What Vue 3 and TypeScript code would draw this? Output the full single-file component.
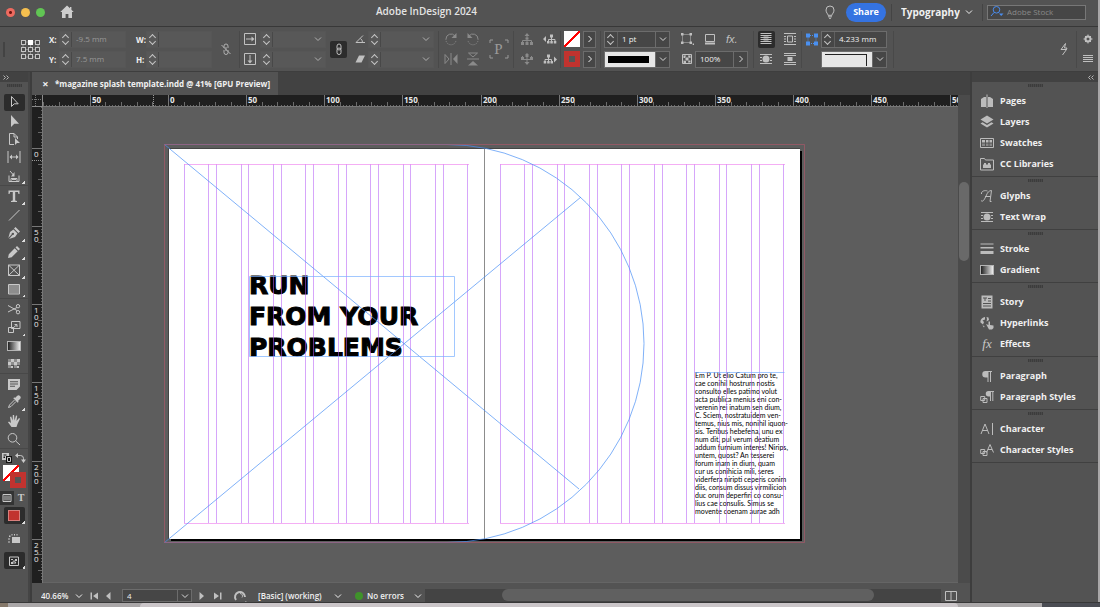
<script setup lang="ts">
import { h, ref } from 'vue'

type Shape = [mode: string, d: string]

const icons: Record<string, Shape[]> = {
  home: [['f', 'M7 0.5 0.3 7H2v6h3.6V9h2.8v4H12V7h1.7L11.4 4.7V2H10v1.3z']],
  bulb: [['s', 'M5 10.3C5 8.6 3 8 3 5a4 4 0 0 1 8 0c0 3-2 3.600-2 5.300zM5 11.800h4M6 13.300h2']],
  chev: [['s', 'M4 5.500 7 8.500 10 5.500']],
  right: [['s', 'M5.500 4 8.500 7 5.500 10']],
  search: [['s', 'M6.500 1.500a3.300 3.300 0 1 1 0 6.600 3.300 3.300 0 0 1 0-6.600M4 7.500 1 11'], ['f', 'M9 8.500h4.500L11.200 11z']],
  unlink: [['s', 'M5 6V4a2 2 0 0 1 4 0v2M9 8v2.500a2 2 0 0 1-4 0V8M7 5v4M2.500 3 11.500 12']],
  link: [['s', 'M5 6V4a2 2 0 0 1 4 0v2.500M9 8v2.500a2 2 0 0 1-4 0V8M5 6a2 2 0 0 0 4 0M5 8a2 2 0 0 1 4 0']],
  scaleX: [['s', 'M1.500 1.500h11v11h-11zM3 7h7'], ['f', 'M8.500 4.500 11.500 7 8.500 9.500z']],
  scaleY: [['s', 'M1.500 1.500h11v11h-11zM7 3v7'], ['f', 'M4.500 8.500 7 11.500 9.500 8.500z']],
  angle: [['s', 'M12 10.500H3L10 3.500M7.500 6.500a5 5 0 0 1 2 4']],
  shear: [['f', 'M6 3.500h6L8.500 10.500h-6z']],
  rotCw: [['s', 'M2 7a5 5 0 0 1 9-3'], ['f', 'M12.500 1v5h-5z'], ['d', 'M2 7a5 5 0 0 0 10 1.500']],
  rotCcw: [['s', 'M12 7a5 5 0 0 0-9-3'], ['f', 'M1.500 1v5h5z'], ['d', 'M12 7a5 5 0 0 1-10 1.500']],
  flipH: [['s', 'M1 2.500 5 7 1 11.500zM7 1v12'], ['f', 'M13.500 2v10L9 7z']],
  flipV: [['s', 'M2.500 1 7 5 11.500 1zM1 7h12'], ['f', 'M2 13.500h10L7 9z']],
  treeUp: [['s', 'M7 3v9M2.500 12V8.500h9V12'], ['f', 'M4.500 4 7 1 9.500 4zM1 10h3v3H1zM5.500 10h3v3h-3zM10 10h3v3h-3zM5.500 5.500h3v2h-3z']],
  treeDown: [['s', 'M7 1v10M2.500 4v3.500h9V4'], ['f', 'M4.500 10 7 13 9.500 10zM1 5h3v3H1zM5.500 2h3v3h-3zM10 5h3v3h-3z']],
  treePrev: [['s', 'M8.500 4v6M5.500 10V7.500h6.500V10'], ['f', 'M0 7 3 4v6zM7 2.500h3v3H7zM4 9h2.500v2.500H4zM7.300 9h2.500v2.500H7.300zM10.800 9h2.500v2.500h-2.500z']],
  treeNext: [['s', 'M5.500 4v6M2 10V7.500h6.500V10'], ['f', 'M14 7.500 11 4.500v6zM4 2.500h3v3H4zM.7 9h2.500v2.500H.7zM4.200 9h2.500v2.500H4.200zM7.500 9H10v2.500H7.500z']],
  corner: [['d', 'M2.500 2.500h8v8h-8z'], ['f', 'M1 1h2.500v2.500H1zM9.500 1H12v2.500H9.500zM1 9.500h2.500V12H1zM9.500 9.500H12V12H9.500zM12.700 11.500H14V13h-1.300z']],
  shadow: [['s', 'M2.500 2.500h9v7h-9z'], ['f', 'M2 10.500h10v2H2z']],
  opacity: [['s', 'M2.500 2.500h9v9h-9z'], ['f', 'M3.500 3.500H6L5 6H3.500zM8 3.500h2.500V6L8.500 5.500zM5.500 5.500h3v3h-3zM3.500 8.500 6 9v2H3.500zM8.500 8.500h2v2H8z']],
  wrapNone: [['s', 'M1.500 1.500h11M1.500 3.500h11M1.500 5.500h11M1.500 7.500h11M1.500 9.500h11M1.500 11.500h11'], ['m', 'M4.500 4h5v5h-5z']],
  wrapBox: [['s', 'M1 1.500h12M1 12.500h12M1 4.500h2M1 7h2M1 9.500h2M11 4.500h2M11 7h2M11 9.500h2M4.500 4h5v6h-5z']],
  wrapShape: [['s', 'M1 2.500h12M1 11.500h12M1 5.500h2M1 8.500h2M11 5.500h2M11 8.500h2'], ['f', 'M7 3.500a3.500 3.500 0 1 1 0 7 3.500 3.500 0 0 1 0-7']],
  wrapJump: [['s', 'M1 1.500h12M1 3.500h12M1 10.500h12M1 12.500h12'], ['f', 'M4.500 5h5v4h-5z']],
  corners: [['d', 'M3 3.500h8v8H3z'], ['f', 'M1 1.500h4v4H1zM9 1.500h4v4H9zM1 9.500h4v4H1zM9 9.500h4v4H9z']],
  bolt: [['s', 'M8.500 1.500 4 7.500h5.500L5.500 13M8.500 1.500 7.500 6H10L9 8']],
  gear: [['w', 'M7 4.500a2.500 2.500 0 1 1 0 5 2.500 2.500 0 0 1 0-5'], ['s', 'M7 2.500v1.500M7 10v1.500M2.500 7H4M10 7h1.500M4 4l1 1M9 9l1 1M10 4 9 5M5 9l-1 1']],
  menu: [['s', 'M2 3.500h10M2 5.500h10M2 7.500h10M2 9.500h10']],
  select: [['s', 'M4.500 1.500v10l2.700-2.700h4z']],
  direct: [['f', 'M4 1v12l3.300-3.300H12z']],
  page: [['s', 'M7 12.500H2.500v-11H7L10.500 5v2M7 1.500V5h3.500'], ['f', 'M8 6v7l2-2h3z']],
  gap: [['s', 'M1 1v12M13 1v12M3 7h8'], ['f', 'M2.500 7 5 4.500v5zM11.500 7 9 4.500v5z']],
  collect: [['s', 'M2 6.500v6h10v-6M4 12V9.500h6V12M3 2l3.500 4'], ['f', 'M7.500 3v4.500H4zM5 9h4v2H5z']],
  type: [['f', 'M1.500 1.500h11V5h-1l-.6-2H8.200v8.600l1.800.4v1H4v-1l1.800-.4V3H3.100l-.6 2h-1z']],
  line: [['s', 'M2 12.500 12.500 2']],
  pen: [['f', 'M8.500 1 13 5.500 11.500 7 7 2.500zM6.500 3.500 10.500 7.500 8 11 2 13 5.500 9a1.200 1.200 0 1 0-.8-.8L1.300 12 3 6z']],
  pencil: [['f', 'M10 1 13 4 11.500 5.500l-3-3zM7.700 3.200l3 3-6 6L1 13l.8-3.700z']],
  frame: [['s', 'M1.500 2h11v10.500h-11zM1.500 2l11 10.500M12.500 2l-11 10.500']],
  rect: [['s', 'M1.500 2.500h11v9.500h-11z'], ['m', 'M2 3h10v8.500H2z']],
  scissors: [['s', 'M1 3.500 10 8.500M1 10 10 5.500M11 2.500a1.700 1.700 0 1 1 0 3.400 1.700 1.700 0 0 1 0-3.400M11 8.500a1.700 1.700 0 1 1 0 3.400 1.700 1.700 0 0 1 0-3.400']],
  transform: [['s', 'M4.500 1.500h8.500v7H4.500zM1.500 7.500h5v5h-5zM5 9l5-4.500M7.500 4.500H10v2.500']],
  feather: [['m', 'M1 2h3v3h3V2h3v3h3v3h-3v3H7V8H4v3H1V8h3V5H1z'], ['f', 'M4 2h3v3H4zM10 2h3v3h-3zM1 5h3v3H1zM7 5h3v3H7zM4 9h2v2H4zM10 9h2v2h-2z']],
  note: [['f', 'M1 2h12v7.500L9.500 13H1zM3 4.200v1h8v-1zM3 6.500v1h8v-1zM3 8.800v1h5v-1z']],
  dropper: [['f', 'M10 1a2 2 0 0 1 3 3L11 6l.7.8-1 1L6.300 3.300l1-1L8 3z'], ['s', 'M7.500 5 2.500 10 1.500 12.500 4 11.500 9 6.500']],
  hand: [['f', 'M4.500 13 1 8.200 2 7.400 4 9 3 3 4.200 2.600 5.600 6.500 5.800 1H7.100l.4 5.400L9 1.500l1.200.3-.7 5.100L12 4l1 .7L10.500 10 9.500 13z']],
  zoom: [['s', 'M5.500 1.500a4.300 4.300 0 1 1 0 8.600 4.300 4.300 0 0 1 0-8.600M8.700 9 13 13']],
  swap: [['s', 'M3 4.500h3.500a3 3 0 0 1 3 3V9'], ['f', 'M1 4.500 4 2v5zM7 8.500h5L9.500 12z']],
  defaults: [['f', 'M2 2h7v7H2z'], ['b', 'M6 5h6v7H6zM3.500 3.500h3v1h-3zM3.500 5.500h1.500V7H3.500z'], ['s', 'M7.500 6.500h3v4h-3z']],
  container: [['s', 'M3 3.500h8v7H3z'], ['m', 'M4 4.500h6v5H4z']],
  screen: [['f', 'M5 5h8v6H5zM2 3.500h1.500V5H2zM4.500 2h1v1.500h-1zM7 2h1v1.500H7zM9.500 2h1v1.500h-1zM1 6.500h2v1H1zM1 9.500h2v1H1z']],
  preview: [['s', 'M2.500 3h9v8.500h-9zM4 5.500h2M8 5.500h2M7 6.500 5 9h4z'], ['f', 'M4 8h2v2H4zM8 5h2v2H8z']],
  pages: [['f', 'M1 5 4 3h2v10H1zM8 3h2l3 2v8H8z'], ['s', 'M7 .5v13.500']],
  layers: [['f', 'M7 0.500 13.500 4.500 7 8.500.5 4.500zM.5 8.500 2.500 7.200 7 10l4.500-2.800 2 1.300L7 12.500z']],
  swatches: [['s', 'M.5 2.500h13v9H.5z'], ['f', 'M2 4h3v2.500H2zM6 4h2.500v2.500H6zM9.500 4H12v2.500H9.500z'], ['m', 'M2 7.500h3V10H2zM6 7.500h2.500V10H6zM9.500 7.500H12V10H9.500z']],
  library: [['s', 'M.5 1.500h4l1 1.500h8v10H.5z'], ['f', 'M3 7.500h1V6h2v1.500h2V6h2v1.500h1V11H3z']],
  glyphs: [['s', 'M1 11.500c2 2 3.500-1 5.500-5.500 1-2.500 2.500-4.500 5-4.500L10 12.500h1.500M5 7.500h5.500M1.500 5C1 2 5 1 7.500 2']],
  stroke: [['f', 'M.5 1.500h13v1H.5zM.5 5h13v1.500H.5zM.5 9h13v3H.5z']],
  story: [['f', 'M1.500.5h11v13h-11zM3 2.500v1h1.500V6h1V3.500H7v-1zM8 3v1h3V3zM8 5.500v1h3v-1zM3 8v1h8V8zM3 10.500v1h8v-1z']],
  hyper: [['f', 'M5 1C2 1.500 0 4 .5 6.500L3 8.500 4 6 2.500 4.500 5 3.500zM6.500 1l2 .5L9 4 6.500 5.500 7 3zM6 8l2.500 1V5.500h1.500V9l3.500.5V12L12 13.500H9zM2.500 9.500l2 .5-.5 1.500z']],
  para: [['f', 'M5.500 2H12v1h-1v10h-1V3H8.500v10h-1V8.500H5.500a3.250 3.250 0 0 1 0-6.500z']],
  paraStyles: [['f', 'M8.500 1H14v1h-.7v9h-1V2H11v9h-1V6.500H8.500a2.750 2.750 0 0 1 0-5.500z'], ['s', 'M.7 6.500h4v4h-4zM3 8.500h4v4H3z']],
  char: [['s', 'M1 12 5 2l4 10M2.500 8.500h5M12.500 1v12']],
  charStyles: [['s', 'M6.500 9.500 10 1.500l3.500 8M8 6.500h4M.7 6.500h4v4h-4zM3 8.500h4v4H3z']],
  first: [['f', 'M3.500 3.500H5v7H3.500zM11 3.500v7L6 7z']],
  prev: [['f', 'M9.500 3v8L5 7z']],
  next: [['f', 'M4.500 3v8L9 7z']],
  last: [['f', 'M9 3.500h1.500v7H9zM3 3.500v7L8 7z']],
  preflight: [['w', 'M3 11A5 5 0 1 1 12 8'], ['s', 'M7 4.500a2.500 2.500 0 0 1 2 4M12 13h1.500']],
  split: [['s', 'M1.500 2.500h11v9h-11zM7 2.500v9']]
}

const paint: Record<string, Record<string, string>> = {
  f: { fill: 'currentColor', 'fill-rule': 'evenodd' },
  m: { fill: 'currentColor', opacity: '0.5' },
  b: { fill: '#111' },
  s: { fill: 'none', stroke: 'currentColor' },
  w: { fill: 'none', stroke: 'currentColor', 'stroke-width': '2' },
  d: { fill: 'none', stroke: 'currentColor', 'stroke-dasharray': '1 1' }
}

const Icon = (props: { name: string }) =>
  h(
    'svg',
    { width: 14, height: 14, viewBox: '0 0 14 14', 'aria-hidden': 'true', style: { display: 'block', flex: 'none' } },
    icons[props.name].map(([mode, d]) => h('path', { ...paint[mode], d }))
  )
Icon.props = ['name']

const toolGroups = [
  { cls: 'five', tools: [['select', 'Selection'], ['direct', 'Direct Selection'], ['page', 'Page'], ['gap', 'Gap'], ['collect', 'Content Collector', 'more']] },
  { cls: 'six', tools: [['type', 'Type', 'more'], ['line', 'Line'], ['pen', 'Pen', 'more'], ['pencil', 'Pencil', 'more'], ['frame', 'Rectangle Frame', 'more'], ['rect', 'Rectangle', 'more']] },
  { cls: 'four', tools: [['scissors', 'Scissors'], ['transform', 'Free Transform', 'more'], ['gradient', 'Gradient Swatch'], ['feather', 'Gradient Feather']] },
  { cls: 'four', tools: [['note', 'Note'], ['dropper', 'Eyedropper', 'more'], ['hand', 'Hand'], ['zoom', 'Zoom']] }
]
const activeTool = ref('select')

const panels = [
  [['pages', 'Pages'], ['layers', 'Layers'], ['swatches', 'Swatches'], ['library', 'CC Libraries']],
  [['glyphs', 'Glyphs'], ['wrapShape', 'Text Wrap']],
  [['stroke', 'Stroke'], ['gradient', 'Gradient']],
  [['story', 'Story'], ['hyper', 'Hyperlinks'], ['fx', 'Effects']],
  [['para', 'Paragraph'], ['paraStyles', 'Paragraph Styles']],
  [['char', 'Character'], ['charStyles', 'Character Styles']]
]

const xPos = ref('-9.5 mm')
const yPos = ref('7.5 mm')
const wSize = ref('')
const hSize = ref('')
const strokeWeight = ref('1 pt')
const opacity = ref('100%')
const cornerSize = ref('4.233 mm')
const stock = ref('')
const pageNo = ref('4')

/* Rulers: 50 mm spans 78.15 px at the current zoom. */
const STEP = 78.15
const hOrigin = 125.5
const vOrigin = 41.5
const hLabels = [-1, 0, 1, 2, 3, 4, 5, 6, 7, 8, 9, 10].map((n) => ({ text: String(Math.abs(n * 50)), x: Math.floor(hOrigin + n * STEP) }))
const vLabels = [0, 1, 2, 3, 4, 5].map((n) => ({ text: String(n * 50), y: Math.floor(vOrigin + n * STEP) }))
const ticks = (origin: number, length: number) => {
  const out: { at: number; size: number }[] = []
  const minor = STEP / 25
  const start = Math.ceil(-origin / minor)
  for (let i = start; origin + i * minor < length; i++) {
    out.push({ at: Math.floor(origin + i * minor), size: i % 5 === 0 ? 4 : 1 })
  }
  return out
}
const hTicks = ticks(hOrigin, 2400)
const vTicks = ticks(vOrigin, 1400)

/* Nine-column grid of each page. */
const columnLines = [184, 500].flatMap((left) =>
  Array.from({ length: 9 }, (_, i) => [left + i * 32.4, left + i * 32.4 + 24.7]).flat()
).map((x) => Math.floor(x) + 0.5)

const story = [
  'Em P. Ut elio Catum pro te,', 'cae conihil hostrum nostis', 'consulto elles patimo volut',
  'acta publica menius eni con-', 'verenin rei inatum sen dium,', 'C. Sciem, nostratuidem ven-',
  'temus, nius mis, nonihil iquon-', 'sis. Teribus hebefena, unu ex', 'num dit, pul verum deatium',
  'addum furnium interes! Nirips,', 'untem, quost? An tesserei', 'forum inam in dium, quam',
  'cur us conihicia mili, seres', 'viderfera niripti ceperis conim', 'diis, consum dissus virmilicion',
  'duc orum deperfiri co consu-', 'lius cae consulis. Simus se', 'movente coenam aurae adh'
]
</script>

<template>
  <div class="app">
    <header class="titlebar">
      <span class="light red"></span><span class="light amber"></span><span class="light green"></span>
      <button class="plain home" aria-label="Home"><Icon name="home" /></button>
      <h1>Adobe InDesign 2024</h1>
      <button class="plain bulb" aria-label="Learn"><Icon name="bulb" /></button>
      <button class="share">Share</button>
      <label class="workspace">
        <select aria-label="Workspace"><option>Typography</option></select>
        <Icon name="chev" />
      </label>
      <label class="stock">
        <span class="lens"><Icon name="search" /></span>
        <input v-model="stock" placeholder="Adobe Stock" aria-label="Search Adobe Stock" />
      </label>
    </header>

    <div class="control">
      <div class="grip-col"></div>
      <svg class="refpoint" width="21" height="21" viewBox="0 0 21 21">
        <path d="M3 3h15v15H3zM3 10.500h15M10.500 3v15" fill="none" stroke="#8a8a8a" />
        <template v-for="r in 3" :key="r">
          <rect v-for="c in 3" :key="c" :x="c * 7 - 5.500" :y="r * 7 - 5.500" width="4" height="4"
            :fill="r === 1 && c === 2 ? '#fff' : '#4a4a4a'" :stroke="r === 1 && c === 2 ? '#fff' : '#c4c4c4'" />
        </template>
      </svg>

      <div class="pair labels"><label for="fx">X:</label><label for="fy">Y:</label></div>
      <div class="pair">
        <div class="field dim"><button class="spin" aria-label="Step X"></button><input id="fx" v-model="xPos" /></div>
        <div class="field dim"><button class="spin" aria-label="Step Y"></button><input id="fy" v-model="yPos" /></div>
      </div>
      <div class="pair labels wide"><label for="fw">W:</label><label for="fh">H:</label></div>
      <div class="pair">
        <div class="field dim"><button class="spin" aria-label="Step W"></button><input id="fw" v-model="wSize" /></div>
        <div class="field dim"><button class="spin" aria-label="Step H"></button><input id="fh" v-model="hSize" /></div>
      </div>
      <button class="plain muted" aria-label="Constrain proportions"><Icon name="unlink" /></button>
      <div class="pair icons sep"><Icon name="scaleX" /><Icon name="scaleY" /></div>
      <div class="pair">
        <div v-for="n in ['Scale X', 'Scale Y']" :key="n" class="field dim">
          <button class="spin" :aria-label="'Step ' + n"></button>
          <select :aria-label="n"><option></option></select><span class="arrow"><Icon name="chev" /></span>
        </div>
      </div>
      <button class="plain pressed" aria-label="Constrain scaling"><Icon name="link" /></button>
      <div class="pair icons"><Icon name="angle" /><Icon name="shear" /></div>
      <div class="pair">
        <div v-for="n in ['Rotation', 'Shear']" :key="n" class="field dim">
          <button class="spin" :aria-label="'Step ' + n"></button>
          <select :aria-label="n"><option></option></select><span class="arrow"><Icon name="chev" /></span>
        </div>
      </div>
      <i></i>
      <div class="pair icons faint sep">
        <button class="plain" aria-label="Rotate clockwise"><Icon name="rotCw" /></button>
        <button class="plain" aria-label="Flip horizontal"><Icon name="flipH" /></button>
      </div>
      <div class="pair icons faint">
        <button class="plain" aria-label="Rotate counterclockwise"><Icon name="rotCcw" /></button>
        <button class="plain" aria-label="Flip vertical"><Icon name="flipV" /></button>
      </div>
      <div class="proxy">
        <svg width="20" height="20" viewBox="0 0 20 20"><path d="M1 4V1h3M16 1h3v3M19 16v3h-3M4 19H1v-3" fill="none" stroke="currentColor" /></svg>
        <span>P</span>
      </div>
      <div class="pair icons faint sep">
        <button class="plain" aria-label="Select container"><Icon name="treeUp" /></button>
        <button class="plain" aria-label="Select content"><Icon name="treeDown" /></button>
      </div>
      <div class="pair icons">
        <button class="plain" aria-label="Select previous"><Icon name="treePrev" /></button>
        <button class="plain" aria-label="Select next"><Icon name="treeNext" /></button>
      </div>
      <div class="pair icons sep">
        <button class="plain swatch none" aria-label="Fill"></button>
        <button class="plain swatch line" aria-label="Stroke"></button>
      </div>
      <div class="pair more">
        <button class="box" aria-label="Fill options"><Icon name="right" /></button>
        <button class="box" aria-label="Stroke options"><Icon name="right" /></button>
      </div>
      <i class="sep"></i>
      <div class="pair">
        <div class="field"><button class="spin" aria-label="Step weight"></button><input v-model="strokeWeight" aria-label="Stroke weight" /><button class="arrow" aria-label="Weights"><Icon name="chev" /></button></div>
        <div class="field"><span class="sample"><b class="bar"></b></span><button class="arrow" aria-label="Stroke type"><Icon name="chev" /></button></div>
      </div>
      <i></i>
      <div class="effects">
        <div class="row">
          <button class="plain" aria-label="Corner options"><Icon name="corner" /></button>
          <button class="plain" aria-label="Drop shadow"><Icon name="shadow" /></button>
          <button class="plain fx" aria-label="Effects">fx.</button>
        </div>
        <div class="row tight">
          <Icon name="opacity" />
          <div class="field"><input v-model="opacity" aria-label="Opacity" /><button class="arrow" aria-label="Opacity slider"><Icon name="right" /></button></div>
        </div>
      </div>
      <div class="wraps sep">
        <button class="plain pressed" aria-label="No text wrap"><Icon name="wrapNone" /></button>
        <button class="plain" aria-label="Wrap around bounding box"><Icon name="wrapBox" /></button>
        <button class="plain" aria-label="Wrap around shape"><Icon name="wrapShape" /></button>
        <button class="plain" aria-label="Jump object"><Icon name="wrapJump" /></button>
      </div>
      <div class="pair icons sep blue"><Icon name="corners" /></div>
      <div class="pair">
        <div class="field"><button class="spin" aria-label="Step corner size"></button><input v-model="cornerSize" aria-label="Corner size" /></div>
        <div class="field"><span class="sample"><b class="cornered"></b></span><button class="arrow" aria-label="Corner shape"><Icon name="chev" /></button></div>
      </div>
      <i></i>
      <i class="sep"></i>
      <button class="plain" aria-label="Quick apply"><Icon name="bolt" /></button>
      <div class="pair icons sep">
        <button class="plain" aria-label="Settings"><Icon name="gear" /></button>
        <button class="plain" aria-label="Panel menu"><Icon name="menu" /></button>
      </div>
    </div>

    <div class="body">
      <aside class="tools">
        <div class="strip"><svg width="6" height="5" viewBox="0 0 6 5"><path d="M.5.5l2 2-2 2M3.500.5l2 2-2 2" fill="none" stroke="#b5b5b5" /></svg></div>
        <div class="grip"></div>
        <div v-for="(g, gi) in toolGroups" :key="gi" class="toolgroup" :class="g.cls">
          <button v-for="t in g.tools" :key="t[0]" class="tool" :class="{ on: activeTool === t[0], more: t[2] }"
            :aria-label="t[1]" @click="activeTool = t[0]">
            <span v-if="t[0] === 'gradient'" class="gradient"></span>
            <Icon v-else :name="t[0]" />
          </button>
        </div>
        <div class="duo"><Icon name="defaults" /><Icon name="swap" /></div>
        <div class="colors"><span class="swatch none"></span><span class="swatch line"></span></div>
        <div class="duo second"><span class="dark"><Icon name="container" /></span><b>T</b></div>
        <button class="tool on more big" aria-label="Apply color"><span class="apply"></span></button>
        <button class="tool mid" aria-label="Screen frame"><Icon name="screen" /></button>
        <button class="tool on more big" aria-label="Screen mode"><Icon name="preview" /></button>
      </aside>

      <main class="document">
        <div class="tabs">
          <div class="tab"><button class="plain" aria-label="Close document">×</button><span>*magazine splash template.indd @ 41% [GPU Preview]</span></div>
        </div>
        <div class="stage">
          <div class="origin"><svg width="11" height="12" viewBox="0 0 11 12"><path d="M0 4.500h11M3.500 0v12" stroke="#777" stroke-dasharray="1 1" /><path d="M0 11.500h11M10.500 0v12" stroke="#8a8a8a" /></svg></div>
          <div class="ruler horizontal">
            <svg width="2400" height="12">
              <rect v-for="t in hTicks" :key="t.at" :x="t.at" :y="11 - t.size" width="1" :height="t.size" fill="#6c6c6c" />
              <rect y="11" width="2400" height="1" fill="#777" />
              <rect v-for="l in hLabels" :key="l.x" :x="l.x" y="0" width="1" height="12" fill="#777" />
              <path d="M110.500 0v12" stroke="#999" stroke-dasharray="1 1" />
              <text v-for="l in hLabels" :key="'t' + l.x" :x="l.x + 2" y="8">{{ l.text }}</text>
            </svg>
          </div>
          <div class="ruler vertical">
            <svg width="11" height="1400">
              <rect v-for="t in vTicks" :key="t.at" :x="10 - t.size" :y="t.at" :width="t.size" height="1" fill="#666" />
              <rect x="10" width="1" height="1400" fill="#777" />
              <path d="M0 53.500h11" stroke="#999" stroke-dasharray="1 1" />
              <rect v-for="l in vLabels" :key="l.y" x="0" :y="l.y" width="11" height="1" fill="#777" />
            </svg>
            <span v-for="l in vLabels" :key="l.y" class="stacked" :style="{ top: l.y + 1 + 'px' }">{{ l.text }}</span>
          </div>
          <div class="canvas">
            <div class="headline">RUN<br />FROM YOUR<br />PROBLEMS</div>
            <div class="story"><div v-for="line in story" :key="line">{{ line }}</div></div>
            <svg class="under" width="915" height="476" viewBox="43 107 915 476">
              <path d="M171 151h631v390H171z" fill="#000" />
              <path d="M169 149h631v390H169z" fill="#fff" />
              <path d="M168.500 539V148.500H800" fill="none" stroke="#444" />
            </svg>
            <svg class="over" width="915" height="476" viewBox="43 107 915 476" fill="none">
              <path d="M484.500 149v390" stroke="#8c8c8c" />
              <path v-for="x in columnLines" :key="x" :d="`M${x} 164v359`" stroke="#b45cf5" stroke-opacity="0.550" />
              <path d="M184 164.500h285M184 523.500h285M500 164.500h285M500 523.500h285" stroke="#f08cf0" stroke-opacity="0.700" />
              <path d="M164.500 144.500H447a197 199 0 0 1 0 398H164.500M164.500 144.500 579 489M164.500 542.500 581 197" stroke="#4a90f5" stroke-opacity="0.700" />
              <path d="M164.500 542.500v-398h640v398z" stroke="#a8586a" stroke-opacity="0.700" />
              <path d="M249.500 276.500h205v80h-205zM694.500 372.500h90" stroke="#7ab0ff" stroke-opacity="0.700" />
            </svg>
          </div>
          <div class="vscroll"><span></span></div>
        </div>
        <footer class="status">
          <label class="pick zoompick"><select aria-label="Zoom"><option>40.66%</option></select><Icon name="chev" /></label>
          <button class="plain" aria-label="First page"><Icon name="first" /></button>
          <button class="plain" aria-label="Previous page"><Icon name="prev" /></button>
          <div class="field pageno"><input v-model="pageNo" aria-label="Page" /><button class="arrow" aria-label="Pages"><Icon name="chev" /></button></div>
          <button class="plain" aria-label="Next page"><Icon name="next" /></button>
          <button class="plain" aria-label="Last page"><Icon name="last" /></button>
          <button class="plain pre" aria-label="Preflight menu"><Icon name="preflight" /></button>
          <label class="pick profile"><select aria-label="Preflight profile"><option>[Basic] (working)</option></select><Icon name="chev" /></label>
          <label class="pick errors"><span class="ok"></span><select aria-label="Preflight result"><option>No errors</option></select><Icon name="chev" /></label>
          <div class="hscroll"><span></span></div>
          <button class="plain" aria-label="Split layout view"><Icon name="split" /></button>
        </footer>
      </main>

      <aside class="panels">
        <div class="strip"><svg width="6" height="5" viewBox="0 0 6 5"><path d="M2.500.5l-2 2 2 2M5.500.5l-2 2 2 2" fill="none" stroke="#b5b5b5" /></svg></div>
        <section v-for="(group, gi) in panels" :key="gi">
          <div class="grip"></div>
          <button v-for="p in group" :key="p[0]" class="panel">
            <span v-if="p[0] === 'gradient'" class="gradient"></span>
            <span v-else-if="p[0] === 'fx'" class="fxglyph" aria-hidden="true">fx</span>
            <Icon v-else :name="p[0]" />
            <span>{{ p[1] }}</span>
          </button>
        </section>
      </aside>
    </div>
    <div class="desktop"><span></span></div>
  </div>
</template>

<style>
html, body { background: #a9a7a8; overflow: hidden; }
</style>

<style scoped>
* { box-sizing: border-box; }
.app {
  height: 100vh; display: flex; flex-direction: column; padding-right: 2px;
  font: 8px/12px "Open Sans", "Noto Sans", sans-serif; color: #f0f0f0; overflow: hidden;
}
button, input, select { font: inherit; color: inherit; margin: 0; padding: 0; border: 0; background: none; min-width: 0; border-radius: 0; }
select { appearance: none; outline: none; }
.plain { display: flex; align-items: center; justify-content: center; color: #c0c0c0; }

.titlebar { height: 27px; flex: none; display: flex; align-items: center; background: #535353; border-bottom: 1px solid #383838; padding: 0 12px 2px 6px; }
.light { width: 9px; height: 9px; border-radius: 50%; margin-right: 6px; flex: none; }
.light.red { background: radial-gradient(circle, #6e1410 0 1px, #ee6a5f 2px); }
.light.amber { background: #f5bf4f; }
.light.green { background: #61c554; }
.home { margin-left: 9px; color: #cdcdcd; }
h1 { font-size: 10px; font-weight: 600; line-height: 14px; margin: 0 auto 3px 302px; white-space: nowrap; color: #e4e4e4; }
.bulb { margin-right: 9px; }
.share { width: 40px; height: 19px; border-radius: 10px; background: #3573e1; color: #fff; font-size: 9px; font-weight: 700; flex: none; }
.workspace { display: flex; align-items: center; justify-content: space-between; width: 92px; height: 17px; margin: 0 4px 0 5px; padding: 0 6px 0 9px; border: solid #444; border-width: 0 1px; font-size: 10px; font-weight: 700; flex: none; }
.workspace select { line-height: 15px; }
.stock { display: flex; align-items: center; width: 99px; height: 15px; border: 1px solid #777; background: #464646; flex: none; padding-left: 2px; }
.stock input { flex: 1; width: 0; padding-left: 3px; }
.stock input::placeholder { color: #8a8a8a; opacity: 1; }
.lens { color: #4a8df0; }

.control {
  height: 45px; flex: none; background: #535353; display: grid; align-items: center;
  grid-template-columns: 18px 31px 10px 67px 20px 66px 27px 21px 66px 25px 17px 66px 4px 24px 22px 29px 26px 21px 23px 17px 4px 66px 6px 77px 48px 20px 66px 6px minmax(0, 1fr) 24px 22px;
  border-bottom: 1px solid #3e3e3e;
}
.control > * { min-width: 0; }
.grip-col { width: 2px; height: 15px; margin-left: 3px; background: #434343; }
.refpoint { display: block; margin-left: 2px; }
.pair { display: grid; grid-template-rows: 17px 17px; row-gap: 3px; align-items: center; }
.labels label { font-weight: 700; line-height: 17px; }
.labels.wide { padding-left: 10px; }
.icons { justify-items: center; color: #c0c0c0; }
.sep { border-left: 1px solid #494949; align-self: center; height: 37px; }
.faint, .faint .plain { color: #8a8a8a; }
.muted { color: #b0b0b0; }
.blue { color: #4a90f0; }
.field { height: 17px; display: flex; align-items: stretch; border: 1px solid #6c6c6c; background: #464646; }
.field.dim { border-color: #565656; background: #585858; color: #989898; }
.field input, .field select { flex: 1; width: 0; padding-left: 4px; outline: none; }
.spin { width: 13px; flex: none; border-right: 1px solid #5f5f5f; position: relative; }
.dim .spin { border-color: #484848; width: 12px; }
.spin::before, .spin::after { content: ""; position: absolute; left: 3px; width: 4px; height: 4px; border: solid #c4c4c4; border-width: 1px 0 0 1px; transform: rotate(45deg); }
.spin::before { top: 3px; }
.spin::after { bottom: 3px; transform: rotate(225deg); }
.arrow { width: 14px; flex: none; display: flex; align-items: center; justify-content: center; color: #d8d8d8; border-left: 1px solid #6c6c6c; }
.dim .arrow { border: 0; color: #b0b0b0; pointer-events: none; }
.pressed { background: #2c2c2c; width: 17px; height: 17px; justify-self: center; border-radius: 2px; }
.proxy { display: grid; place-items: center; color: #9a9a9a; font: 15px/20px "Liberation Serif", serif; }
.proxy > * { grid-area: 1 / 1; }
.swatch { display: block; width: 16px; height: 16px; }
.swatch.none { background: linear-gradient(135deg, #fff 46%, #f00 46% 54%, #fff 54%); }
.swatch.line { border: 5px solid #c1332f; background: #555; }
.box { width: 13px; height: 17px; border: 1px solid #6c6c6c; background: #464646; display: flex; align-items: center; justify-content: center; }
.sample { flex: 1; background: #e6e6e6; display: flex; align-items: center; padding: 0 3px; }
.bar { flex: 1; height: 7px; background: #000; margin-right: 3px; }
.cornered { flex: 1; align-self: stretch; margin: 2px 2px 1px 0; border: solid #222; border-width: 1px 1px 0 0; }
.effects { display: grid; grid-template-rows: 17px 17px; row-gap: 3px; padding: 0 5px 0 4px; }
.row { display: flex; align-items: center; gap: 9px; color: #c0c0c0; }
.row.tight { gap: 1px; }
.row .field { flex: 1; color: #f0f0f0; }
.fx { font: italic 11px/14px "Liberation Sans", sans-serif; }
.wraps { display: grid; grid-template: 17px 17px / 24px 23px; row-gap: 3px; justify-items: center; }

.body { flex: 1; min-height: 0; display: flex; background: #3d3d3d; }
.strip { height: 10px; flex: none; background: #424242; display: flex; align-items: center; }
.tools { width: 30px; flex: none; background: #535353; display: flex; flex-direction: column; align-items: center; border-right: 2px solid #454545; overflow: hidden; }
.tools .strip { align-self: stretch; padding-left: 3px; }
.grip { width: 15px; height: 3px; background: repeating-linear-gradient(90deg, #3c3c3c 0 1px, #484848 1px 2px); flex: none; }
.tools .grip { margin: 2px 0 6px; }
.toolgroup { display: grid; grid-auto-rows: 1fr; flex: none; justify-items: center; align-self: stretch; border-bottom: 1px solid #484848; margin-bottom: 1px; }
.five { height: 93px; }
.six { height: 112px; }
.four { height: 74px; }
.tool { width: 21px; height: 17px; align-self: center; display: flex; align-items: center; justify-content: center; color: #c8c8c8; position: relative; flex: none; }
.tool.on { background: #2c2c2c; border-radius: 2px; }
.tool.more::after { content: ""; position: absolute; right: 0; bottom: 0; width: 3px; height: 3px; background: linear-gradient(135deg, transparent 50%, #ddd 50%); }
.gradient { width: 14px; height: 10px; border: 1px solid #b5b5b5; background: linear-gradient(90deg, #222, #eee); flex: none; }
.duo { display: flex; justify-content: center; color: #c8c8c8; margin-top: 1px; }
.duo b { width: 14px; text-align: center; font: bold 10px/14px "Liberation Serif", serif; }
.duo .dark { background: #333; }
.colors { display: grid; width: 23px; margin: 0 0 2px; }
.colors .swatch { grid-area: 1 / 1; }
.colors .line { margin: 7px 0 0 7px; }
.second { margin-bottom: 2px; margin-top: 1px; }
.big { height: 17px; }
.mid { height: 17px; margin: 6px 0 5px; }
.apply { width: 12px; height: 11px; background: #c1332f; border: 1px solid #d8807d; }

.document { flex: 1; min-width: 0; display: flex; flex-direction: column; margin-left: 2px; }
.tabs { height: 23px; flex: none; background: #424242; display: flex; }
.tab { background: #535353; display: flex; align-items: center; padding: 0 8px 0 10px; gap: 6px; font-weight: 700; white-space: nowrap; }
.tab .plain { font-size: 11px; width: 7px; color: #eee; }
.stage { flex: 1; min-height: 0; display: grid; grid-template: 12px minmax(0, 1fr) / 11px minmax(0, 1fr) 12px; background: #4b4b4b; }
.origin, .ruler { background: #1f1f1f; overflow: hidden; }
.ruler svg, .origin svg { display: block; }
.ruler text { fill: #e8e8e8; font: 700 8px "Open Sans", "Noto Sans", sans-serif; }
.horizontal { grid-column: 2 / 3; }
.vertical { grid-row: 2; position: relative; }
.stacked { position: absolute; left: 2px; width: 5px; line-height: 7px; padding-top: 1px; word-break: break-all; color: #e8e8e8; }
.canvas { grid-area: 2 / 2; position: relative; overflow: hidden; background: #5d5d5d; border-bottom: 1px solid #656565; }
.under, .over { position: absolute; left: 0; top: 0; }
.headline, .story { position: absolute; z-index: 1; color: #000; white-space: nowrap; }
.over { z-index: 2; }
.headline { left: 206px; top: 163px; font: bold 25px/31px "DejaVu Sans", sans-serif; -webkit-text-stroke: 1px #000; }
.story { left: 652px; top: 264px; font: 7px/8px Lato, "Liberation Sans", sans-serif; }
.vscroll { grid-area: 2 / 3; background: #4b4b4b; padding: 75px 1px 0; }
.vscroll span { display: block; height: 79px; border-radius: 5px; background: #696969; }
.status { height: 19px; flex: none; background: #535353; padding-top: 6px; display: flex; align-items: center; }
.status .plain { flex: none; height: 13px; }
.pick { display: flex; align-items: center; flex: none; font-weight: 600; }
.pick select { flex: 1; }
.zoompick { width: 45px; margin: 0 1px 0 9px; }
.pageno { width: 70px; height: 13px; margin: 0 3px 0 7px; flex: none; }
.pageno + .plain { margin-right: 2px; }
.pre { margin: 0 11px 0 8px; }
.profile { width: 87px; margin-right: 10px; }
.errors { width: 70px; }
.errors select { padding-left: 4px; }
.ok { width: 8px; height: 8px; border-radius: 50%; background: #3f922a; }
.hscroll { flex: 1; min-width: 0; height: 13px; background: #444; margin-right: 3px; }
.hscroll span { display: block; height: 12px; margin: 0 13% 0 15%; border-radius: 6px; background: #606060; }
.status > .plain:last-child { margin-right: 12px; }

.panels { width: 126px; flex: none; background: #535353; margin-left: 2px; overflow: hidden; }
.panels .strip { justify-content: flex-end; padding-right: 4px; }
.panels section { padding: 2px 0; border-bottom: 1px solid #404040; }
.panels .grip { margin: 0 auto 3px; }
.panel { display: flex; align-items: center; gap: 6px; width: 100%; height: 21px; padding-left: 8px; font-size: 9px; font-weight: 700; color: #f0f0f0; }
.panel svg { color: #bcbcbc; }
.fxglyph { width: 14px; font: italic 13px/14px "Liberation Serif", serif; color: #c8c8c8; }
.desktop { height: 5px; flex: none; margin-right: -2px; border-top: 1px solid #383838; background: linear-gradient(90deg, #85786a 8px, #aaa7a8 8px calc(100% - 58px), #4b4d54 calc(100% - 58px)); padding: 0 142px 0 140px; }
.desktop span { display: block; height: 4px; background: #cbc6c9; border-radius: 4px 4px 0 0; }
</style>
